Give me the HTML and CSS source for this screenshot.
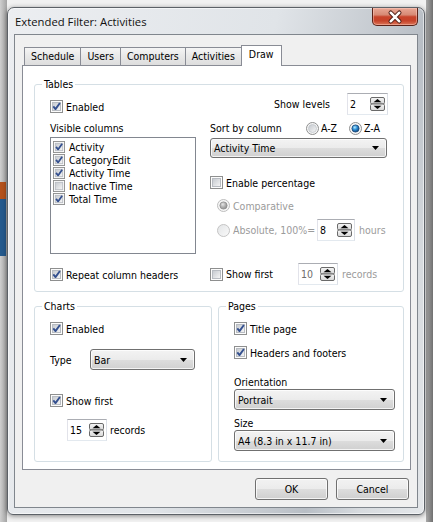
FILE: index.html
```html
<!DOCTYPE html>
<html>
<head>
<meta charset="utf-8">
<title>Extended Filter: Activities</title>
<link rel="stylesheet" href="styles.css">
</head>
<body>
<svg class="defs" width="0" height="0" aria-hidden="true">
  <defs>
    <linearGradient id="g-box" x1="0" y1="0" x2="1" y2="1">
      <stop offset="0" stop-color="#c4c8ce"/>
      <stop offset="1" stop-color="#f7f7f7"/>
    </linearGradient>
    <linearGradient id="g-box-dis" x1="0" y1="0" x2="1" y2="1">
      <stop offset="0" stop-color="#e2e4e6"/>
      <stop offset="1" stop-color="#fafafa"/>
    </linearGradient>
    <radialGradient id="g-dot" cx="0.4" cy="0.35" r="0.7">
      <stop offset="0" stop-color="#b5ecff"/>
      <stop offset="0.45" stop-color="#2e8fd6"/>
      <stop offset="1" stop-color="#0c3c6f"/>
    </radialGradient>
    <radialGradient id="g-dot-dis" cx="0.4" cy="0.35" r="0.7">
      <stop offset="0" stop-color="#e6e6e6"/>
      <stop offset="0.5" stop-color="#b3b3b3"/>
      <stop offset="1" stop-color="#8c8c8c"/>
    </radialGradient>
    <linearGradient id="g-spin" x1="0" y1="0" x2="0" y2="1">
      <stop offset="0" stop-color="#f6f6f6"/>
      <stop offset="1" stop-color="#d6d6d6"/>
    </linearGradient>
    <symbol id="cb-off" viewBox="0 0 13 13">
      <rect x="0.5" y="0.5" width="12" height="12" fill="#fcfcfc" stroke="#8e8f8f"/>
      <rect x="2.5" y="2.5" width="8" height="8" fill="url(#g-box)" stroke="#b8bcc2"/>
    </symbol>
    <symbol id="cb-on" viewBox="0 0 13 13">
      <rect x="0.5" y="0.5" width="12" height="12" fill="#fcfcfc" stroke="#8e8f8f"/>
      <rect x="2.5" y="2.5" width="8" height="8" fill="url(#g-box)" stroke="#b8bcc2"/>
      <path d="M3.3 6.4 L5.5 9.1 L9.9 3" fill="none" stroke="#34508f" stroke-width="1.9" stroke-linejoin="round"/>
    </symbol>
    <symbol id="rb-off" viewBox="0 0 13 13">
      <circle cx="6.5" cy="6.5" r="6" fill="#f6f6f6" stroke="#8e8f8f"/>
      <circle cx="6.5" cy="6.5" r="4" fill="url(#g-box)" stroke="#c2c6cb" stroke-width="0.8"/>
    </symbol>
    <symbol id="rb-on" viewBox="0 0 13 13">
      <circle cx="6.5" cy="6.5" r="6" fill="#f6f6f6" stroke="#8e8f8f"/>
      <circle cx="6.5" cy="6.5" r="3.6" fill="url(#g-dot)" stroke="#1a4676" stroke-width="0.8"/>
    </symbol>
    <symbol id="rb-dis-on" viewBox="0 0 13 13">
      <circle cx="6.5" cy="6.5" r="6" fill="#f6f6f6" stroke="#bdbdbd"/>
      <circle cx="6.5" cy="6.5" r="3.6" fill="url(#g-dot-dis)" stroke="#8d8d8d" stroke-width="0.8"/>
    </symbol>
    <symbol id="rb-dis-off" viewBox="0 0 13 13">
      <circle cx="6.5" cy="6.5" r="6" fill="url(#g-box-dis)" stroke="#c4c4c4"/>
    </symbol>
    <symbol id="spinbtn" viewBox="0 0 15 14">
      <rect x="0.5" y="0.5" width="14" height="6.5" rx="1.5" fill="url(#g-spin)" stroke="#6a6a6a"/>
      <rect x="0.5" y="7" width="14" height="6.5" rx="1.5" fill="url(#g-spin)" stroke="#6a6a6a"/>
      <path d="M3.5 5.2 L7.5 2 L11.5 5.2 Z" fill="#000"/>
      <path d="M3.5 8.8 L7.5 12 L11.5 8.8 Z" fill="#000"/>
    </symbol>
    <symbol id="arrow" viewBox="0 0 7 4">
      <path d="M0 0 H7 L3.5 4 Z" fill="#000"/>
    </symbol>
  </defs>
</svg>

<div class="screen">
  <div class="window">
    <div class="titlebar">
      <span class="title">Extended Filter: Activities</span>
      <div class="close">
        <svg width="46" height="18" viewBox="0 0 46 18">
          <path d="M18.5 4.5 L27.5 13.5 M27.5 4.5 L18.5 13.5" stroke="#4c1c14" stroke-width="4.6" stroke-linecap="round"/>
          <path d="M18.5 4.5 L27.5 13.5 M27.5 4.5 L18.5 13.5" stroke="#ffffff" stroke-width="2.6" stroke-linecap="round"/>
        </svg>
      </div>
    </div>

    <div class="client">
      <div class="tabs">
        <div class="tab">Schedule</div>
        <div class="tab">Users</div>
        <div class="tab">Computers</div>
        <div class="tab">Activities</div>
        <div class="tab active">Draw</div>
      </div>

      <div class="panel">
        <div class="group tables">
          <span class="legend">Tables</span>
          <div class="tcol tleft">
            <div class="check t-enabled"><svg class="cb"><use href="#cb-on"/></svg><span>Enabled</span></div>
            <div class="label t-vis">Visible columns</div>
            <div class="listbox">
              <div class="item"><svg class="cb small"><use href="#cb-on"/></svg><span>Activity</span></div>
              <div class="item"><svg class="cb small"><use href="#cb-on"/></svg><span>CategoryEdit</span></div>
              <div class="item"><svg class="cb small"><use href="#cb-on"/></svg><span>Activity Time</span></div>
              <div class="item"><svg class="cb small"><use href="#cb-off"/></svg><span>Inactive Time</span></div>
              <div class="item"><svg class="cb small"><use href="#cb-on"/></svg><span>Total Time</span></div>
            </div>
            <div class="check t-repeat"><svg class="cb"><use href="#cb-on"/></svg><span>Repeat column headers</span></div>
          </div>
          <div class="tcol tright">
            <div class="levels">
              <span>Show levels</span>
              <div class="spin w41"><span>2</span><svg class="spinbtn"><use href="#spinbtn"/></svg></div>
            </div>
            <div class="sortrow">
              <span>Sort by column</span>
              <div class="radios">
                <span class="radio"><svg class="rb"><use href="#rb-off"/></svg><span>A-Z</span></span>
                <span class="radio"><svg class="rb"><use href="#rb-on"/></svg><span>Z-A</span></span>
              </div>
            </div>
            <div class="combo t-combo"><span>Activity Time</span><svg class="arrow"><use href="#arrow"/></svg></div>
            <div class="check t-pct"><svg class="cb"><use href="#cb-off"/></svg><span>Enable percentage</span></div>
            <div class="radio dis t-comp"><svg class="rb"><use href="#rb-dis-on"/></svg><span>Comparative</span></div>
            <div class="absrow">
              <div class="radio dis abslabel"><svg class="rb"><use href="#rb-dis-off"/></svg><span>Absolute, 100%=</span></div>
              <div class="spin w38"><span>8</span><svg class="spinbtn"><use href="#spinbtn"/></svg></div>
              <span class="dis">hours</span>
            </div>
            <div class="firstrow">
              <div class="check sflabel"><svg class="cb"><use href="#cb-off"/></svg><span>Show first</span></div>
              <div class="spin w40 grey"><span>10</span><svg class="spinbtn"><use href="#spinbtn"/></svg></div>
              <span class="dis">records</span>
            </div>
          </div>
        </div>

        <div class="lower">
          <div class="group charts">
            <span class="legend">Charts</span>
            <div class="check c-enabled"><svg class="cb"><use href="#cb-on"/></svg><span>Enabled</span></div>
            <div class="typerow">
              <span class="typelabel">Type</span>
              <div class="combo c-combo"><span>Bar</span><svg class="arrow"><use href="#arrow"/></svg></div>
            </div>
            <div class="check c-first"><svg class="cb"><use href="#cb-on"/></svg><span>Show first</span></div>
            <div class="recrow">
              <div class="spin w40"><span>15</span><svg class="spinbtn"><use href="#spinbtn"/></svg></div>
              <span>records</span>
            </div>
          </div>
          <div class="group pages">
            <span class="legend">Pages</span>
            <div class="check p-title"><svg class="cb"><use href="#cb-on"/></svg><span>Title page</span></div>
            <div class="check p-head"><svg class="cb"><use href="#cb-on"/></svg><span>Headers and footers</span></div>
            <div class="label p-orient">Orientation</div>
            <div class="combo p-combo"><span>Portrait</span><svg class="arrow"><use href="#arrow"/></svg></div>
            <div class="label p-size">Size</div>
            <div class="combo p-combo"><span>A4 (8.3 in x 11.7 in)</span><svg class="arrow"><use href="#arrow"/></svg></div>
          </div>
        </div>
      </div>

      <div class="buttons">
        <div class="btn">OK</div>
        <div class="btn">Cancel</div>
      </div>
    </div>
  </div>
</div>
</body>
</html>
```

FILE: styles.css
```css
* { box-sizing: border-box; }
html, body { margin: 0; padding: 0; }
body {
  width: 433px;
  height: 522px;
  overflow: hidden;
  font-family: "DejaVu Sans Condensed", "DejaVu Sans", sans-serif;
  font-stretch: condensed;
  font-size: 10.5px;
  line-height: 14px;
  color: #000;
  background:
    linear-gradient(to bottom, transparent 182px, #b4521d 182px, #b4521d 199px, #255a8d 199px, #255a8d 256px, transparent 256px) 0 0 / 6px 100% no-repeat,
    linear-gradient(to right, #cfcfcf, #a3a3a3) 0 0 / 7px 100% no-repeat,
    linear-gradient(to right, #a9a9a9, #707070) 426px 0 / 7px 100% no-repeat,
    #f1f1f1;
}
.defs { display: block; width: 0; height: 0; overflow: hidden; }

.screen { padding: 7px 0 0 7px; }

.window {
  width: 418px;
  height: 508px;
  border: 1px solid #5c6167;
  border-radius: 7px 7px 6px 6px;
  background: linear-gradient(104deg, #eceef1 0%, #e0e4e8 50%, #c2c7cd 72%, #b8bec5 78%, #d7dbdf 88%, #e4e7ea 100%);
  box-shadow: inset 0 0 0 1px rgba(255,255,255,0.55), 0 1px 5px rgba(0,0,0,0.45);
  display: flex;
  flex-direction: column;
}

.titlebar {
  height: 26px;
  flex: none;
  display: flex;
  justify-content: space-between;
  align-items: flex-start;
  padding: 0 6px 0 7px;
}
.title {
  margin-top: 6px;
  font-family: "Open Sans", "Noto Sans", sans-serif;
  font-stretch: normal;
  font-size: 11.3px;
  line-height: 16px;
  color: #111;
}
.close {
  width: 46px;
  height: 18px;
  border: 1px solid #5b2218;
  border-top: none;
  border-radius: 0 0 5px 5px;
  background: linear-gradient(#e9a896 0%, #d78a75 40%, #c8442b 52%, #c6432a 75%, #dc7658 100%);
  box-shadow: inset 0 0 0 1px rgba(255,210,200,0.45);
  display: flex;
  align-items: center;
  justify-content: center;
}
.close svg { display: block; }

.client {
  flex: 1;
  margin: 0 6px 6px 6px;
  background: #f0f0f0;
  border: 1px solid #80868d;
  display: flex;
  flex-direction: column;
}

.tabs {
  display: flex;
  align-items: flex-end;
  height: 20px;
  margin-top: 10px;
  padding-left: 9px;
  position: relative;
  z-index: 1;
}
.tab {
  height: 18px;
  padding: 0 6px;
  line-height: 17px;
  border: 1px solid #898c95;
  border-bottom: none;
  margin-right: -1px;
  background: linear-gradient(#f5f5f5, #e9e9e9 45%, #dddddd 100%);
  white-space: nowrap;
}
.tab.active {
  height: 21px;
  margin-bottom: -1px;
  padding: 1px 7px 0 7px;
  background: #fff;
  line-height: 15px;
}

.panel {
  width: 389px;
  height: 405px;
  margin-left: 7px;
  background: #fff;
  border: 1px solid #898c95;
  flex: none;
}

.group {
  border: 1px solid #d5dfe5;
  border-radius: 3px;
  position: relative;
}
.legend {
  position: absolute;
  top: -8px;
  left: 7px;
  padding: 0 2px;
  background: #fff;
  line-height: 14px;
}

.tables {
  width: 370px;
  height: 208px;
  margin: 18px 0 0 11px;
  padding: 0 15px;
  display: flex;
  gap: 14px;
}
.tcol { display: flex; flex-direction: column; }
.tleft { width: 146px; }
.tright { width: 178px; }

.check, .radio {
  display: flex;
  align-items: center;
  gap: 3px;
  height: 13px;
  white-space: nowrap;
}
.cb, .rb { width: 13px; height: 13px; flex: none; display: block; }
.cb.small { width: 12px; height: 12px; }
.label { height: 14px; white-space: nowrap; }
.dis { color: #9b9b9b; }

.t-enabled { margin-top: 15px; }
.t-vis { margin-top: 8px; }
.listbox {
  margin-top: 2px;
  height: 117px;
  border: 1px solid #828790;
  background: #fff;
  padding: 2px 0 0 2px;
}
.item {
  height: 13px;
  display: flex;
  align-items: center;
  gap: 4px;
  white-space: nowrap;
}
.t-repeat { margin-top: 14px; }

.levels {
  margin-top: 8px;
  height: 22px;
  display: flex;
  align-items: center;
  justify-content: flex-end;
  gap: 17px;
}
.spin {
  height: 22px;
  background: #fff;
  border: 1px solid;
  border-color: #abadb3 #dbdfe6 #e3e9ef #e2e3ea;
  display: flex;
  align-items: center;
  justify-content: space-between;
  padding: 0 2px 0 2px;
  flex: none;
}
.spin.grey span { color: #6d6d6d; }
.w41 { width: 41px; }
.w38 { width: 38px; }
.w40 { width: 40px; }
.spinbtn { width: 15px; height: 14px; display: block; }

.sortrow {
  margin-top: 6px;
  height: 14px;
  display: flex;
  align-items: center;
  white-space: nowrap;
}
.radios {
  margin-left: auto;
  margin-right: 8px;
  display: flex;
  gap: 12px;
}
.radios .radio { gap: 2px; }

.combo {
  height: 21px;
  border: 1px solid #707070;
  border-radius: 3px;
  background: linear-gradient(#f3f3f3 0%, #ebebeb 50%, #dddddd 51%, #d0d0d0 100%);
  box-shadow: inset 0 0 0 1px rgba(255,255,255,0.75);
  display: flex;
  align-items: center;
  justify-content: space-between;
  padding: 0 7px 0 3px;
  white-space: nowrap;
}
.arrow { width: 7px; height: 4px; display: block; flex: none; }
.t-combo { margin-top: 3px; height: 20px; width: 177px; }

.t-pct { margin-top: 18px; }
.t-comp { margin-top: 10px; padding-left: 7px; }
.absrow {
  margin-top: 7px;
  display: flex;
  align-items: center;
  white-space: nowrap;
}
.abslabel { width: 107px; padding-left: 7px; }
.absrow .spin { margin-right: 4px; }
.firstrow {
  margin-top: 22px;
  display: flex;
  align-items: center;
  white-space: nowrap;
}
.sflabel { width: 88px; }
.firstrow .spin { margin-right: 4px; }

.lower {
  display: flex;
  gap: 6px;
  margin: 14px 0 0 11px;
}
.charts {
  width: 178px;
  height: 156px;
  padding: 0 0 0 15px;
}
.pages {
  width: 186px;
  height: 156px;
  padding: 0 8px 0 15px;
}
.c-enabled { margin-top: 15px; }
.typerow {
  margin-top: 14px;
  display: flex;
  align-items: center;
}
.typelabel { width: 40px; }
.c-combo { width: 105px; }
.c-first { margin-top: 24px; }
.recrow {
  margin-top: 12px;
  padding-left: 17px;
  display: flex;
  align-items: center;
  gap: 3px;
}

.p-title { margin-top: 15px; }
.p-head { margin-top: 11px; }
.p-orient { margin-top: 16px; }
.p-size { margin-top: 6px; }
.p-combo { width: 161px; }

.buttons {
  margin-top: 8px;
  padding-right: 8px;
  display: flex;
  justify-content: flex-end;
  gap: 8px;
}
.btn {
  width: 73px;
  height: 22px;
  border: 1px solid #707070;
  border-radius: 3px;
  background: linear-gradient(#f2f2f2 0%, #ebebeb 50%, #dddddd 51%, #cfcfcf 100%);
  box-shadow: inset 0 0 0 1px rgba(255,255,255,0.75);
  display: flex;
  align-items: center;
  justify-content: center;
}
```
